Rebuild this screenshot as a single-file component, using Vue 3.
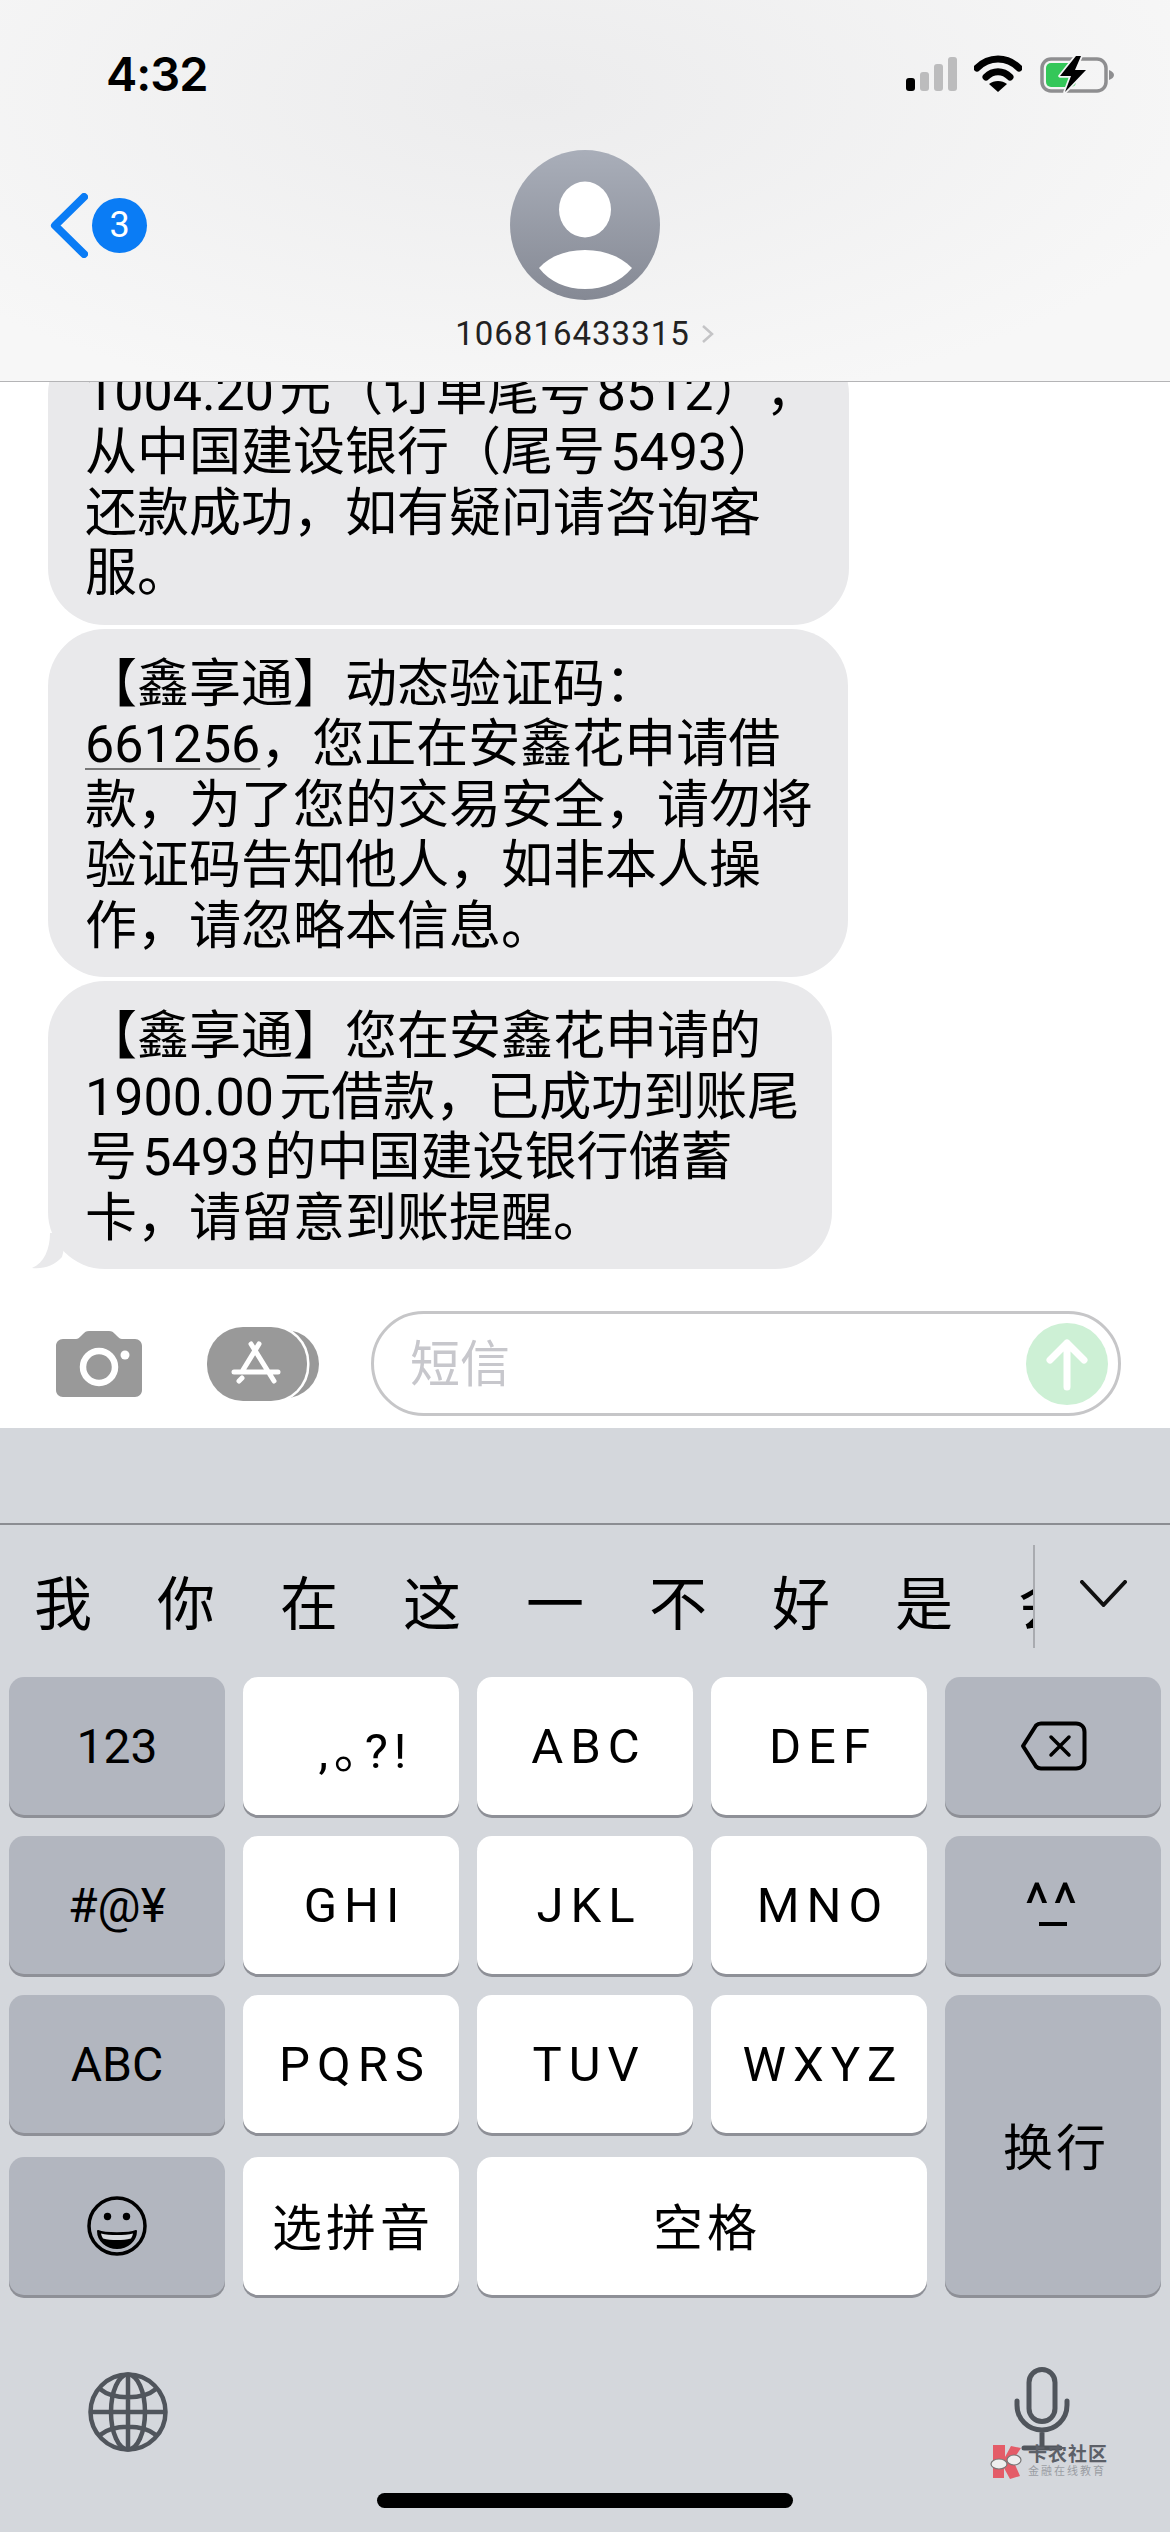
<template>
  <div class="phone">
    <header class="top">
      <div class="status">
        <span class="time">4:32</span>
        <div class="status-icons">
          <div class="signal">
            <i v-for="(h, i) in signalBars" :key="i" :class="{ on: i === 0 }" :style="{ height: h + 'px' }"></i>
          </div>
          <svg class="wifi" width="48" height="38" viewBox="0 0 48 38">
            <path d="M3 13C15 1 33 1 45 13" fill="none" stroke="#000" stroke-width="7" stroke-linecap="round" />
            <path d="M12 22C19 15 29 15 36 22" fill="none" stroke="#000" stroke-width="7" stroke-linecap="round" />
            <path d="M24 37L15 29C20 25 28 25 33 29Z" fill="#000" />
          </svg>
          <svg class="battery" width="75" height="38" viewBox="0 0 75 38">
            <rect x="2" y="4" width="64" height="32" rx="9" fill="none" stroke="#8e8e90" stroke-width="3.5" />
            <rect x="6" y="8" width="30" height="24" rx="5" fill="#34c759" />
            <path d="M69 15c3 1 5 3 5 5s-2 4-5 5Z" fill="#8e8e90" />
            <path d="M36 1L20 21H31L25 37L46 15H35L41 1Z" fill="#000" stroke="#f5f5f6" stroke-width="3.5" paint-order="stroke" stroke-linejoin="round" />
          </svg>
        </div>
      </div>
      <div class="nav">
        <div class="back">
          <svg width="38" height="65" viewBox="0 0 38 65">
            <path d="M34 4L5 32.5L34 61" fill="none" stroke="#0a7cf5" stroke-width="8" stroke-linecap="round" stroke-linejoin="round" />
          </svg>
          <span class="badge">3</span>
        </div>
        <div class="contact">
          <svg width="150" height="150" viewBox="0 0 150 150">
            <defs>
              <linearGradient id="avatarFill" x1="0" y1="0" x2="0" y2="1">
                <stop offset="0" stop-color="#a9aeb9" />
                <stop offset="1" stop-color="#858994" />
              </linearGradient>
            </defs>
            <circle cx="75" cy="75" r="75" fill="url(#avatarFill)" />
            <ellipse cx="75" cy="59.500" rx="26" ry="28" fill="#fff" />
            <path d="M29 118C40 106 56 100 75 100S110 106 122 118C110 132 94 139 75 139S40 132 29 118Z" fill="#fff" />
          </svg>
          <div class="contact-name">
            <span>106816433315</span>
            <svg width="14" height="20" viewBox="0 0 14 20">
              <path d="M2 2L11 10L2 18" fill="none" stroke="#c4c4c6" stroke-width="2.500" />
            </svg>
          </div>
        </div>
        <div></div>
      </div>
    </header>

    <main class="messages">
      <div v-for="(msg, i) in messages" :key="i" class="bubble" :style="{ width: msg.width + 'px' }">
        <div v-for="(line, j) in msg.lines" :key="j" class="line">
          <span v-if="line.code" class="code">{{ line.code }}</span>{{ line.text }}
        </div>
        <svg v-if="i === messages.length - 1" class="tail" width="36" height="36" viewBox="0 0 36 36">
          <path d="M18 0C18 16 12 30 0 35C12 36 22 33 30 24L36 0Z" fill="#e9e9eb" />
        </svg>
      </div>
    </main>

    <section class="composer">
      <svg class="camera" width="86" height="66" viewBox="0 0 86 66">
        <path d="M7 8H20C22 8 23 7 25 5L27 3C29 1 30 0 33 0H53C56 0 57 1 59 3L61 5C63 7 64 8 66 8H79C83 8 86 11 86 15V59C86 63 83 66 79 66H7C3 66 0 63 0 59V15C0 11 3 8 7 8Z" fill="#999" />
        <circle cx="43" cy="36" r="16" fill="none" stroke="#fff" stroke-width="6.500" />
        <circle cx="69" cy="24" r="4.500" fill="#fff" />
      </svg>
      <svg class="appstore" width="113" height="74" viewBox="0 0 113 74">
        <rect x="40" y="3" width="72" height="68" rx="34" fill="#999" />
        <rect x="0" y="0" width="100" height="74" rx="36" fill="#999" stroke="#fff" stroke-width="5" paint-order="stroke" />
        <path d="M44 17L67 54M52 17L36 43M27 45H71M32 54L35 51" fill="none" stroke="#fff" stroke-width="5" stroke-linecap="round" />
      </svg>
      <div class="field">
        <span class="placeholder">短信</span>
        <svg class="send" width="82" height="82" viewBox="0 0 82 82">
          <circle cx="41" cy="41" r="41" fill="#cdf0d5" />
          <path d="M41 64V20M24 37L41 20L58 37" fill="none" stroke="#fff" stroke-width="7" stroke-linecap="round" stroke-linejoin="round" />
        </svg>
      </div>
    </section>

    <section class="keyboard">
      <div class="kb-spacer"></div>
      <div class="candidates">
        <div class="candidate-list">
          <span v-for="c in candidates" :key="c" class="candidate">{{ c }}</span>
        </div>
        <div class="expand">
          <svg width="47" height="27" viewBox="0 0 47 27">
            <path d="M2 2L23.500 25L45 2" fill="none" stroke="#111" stroke-width="4" stroke-linecap="round" stroke-linejoin="round" />
          </svg>
        </div>
      </div>
      <div class="keys">
        <div v-for="k in keys" :key="k.label" class="key" :class="k.cls">{{ k.label }}</div>
        <div class="key fn backspace">
          <svg width="67" height="50" viewBox="0 0 67 50">
            <path d="M21 2.500H56C61 2.500 64.500 6 64.500 11V39C64.500 44 61 47.500 56 47.500H21C19 47.500 17.500 47 16 45.500L3 25L16 4.500C17.500 3 19 2.500 21 2.500Z" fill="none" stroke="#000" stroke-width="4" stroke-linejoin="round" />
            <path d="M31 16L49 34M49 16L31 34" fill="none" stroke="#000" stroke-width="3.500" stroke-linecap="round" />
          </svg>
        </div>
        <div class="key fn kaomoji">
          <span class="carets">^^</span>
          <span class="dash"></span>
        </div>
        <div class="key fn enter">换行</div>
        <div class="key fn emoji">
          <svg width="60" height="60" viewBox="0 0 60 60">
            <circle cx="30" cy="30" r="28" fill="none" stroke="#000" stroke-width="3.500" />
            <circle cx="20.500" cy="20.500" r="3.700" fill="#000" />
            <circle cx="39.500" cy="20.500" r="3.700" fill="#000" />
            <path d="M11 35C18 38 42 38 49 35C49 45 40 52 30 52S11 45 11 35Z" fill="#000" stroke="#000" stroke-width="2" stroke-linejoin="round" />
            <path d="M14 37.500C22 39.500 38 39.500 46 37.500C45.500 39.500 45 41 44 42.500C36 44.500 24 44.500 16 42.500C15 41 14.500 39.500 14 37.500Z" fill="#d8dade" />
          </svg>
        </div>
        <div class="key letter pinyin">选拼音</div>
        <div class="key letter space">空格</div>
      </div>
      <div class="kb-bottom">
        <svg width="80" height="80" viewBox="0 0 80 80">
          <g fill="none" stroke="#50555c" stroke-width="4.500">
            <circle cx="40" cy="40" r="37.500" />
            <ellipse cx="40" cy="40" rx="17" ry="37.500" />
            <path d="M40 3V77M3 40H77M12 17C25 28 55 28 68 17M12 63C25 52 55 52 68 63" />
          </g>
        </svg>
        <svg class="mic" width="56" height="84" viewBox="0 0 56 84">
          <g fill="none" stroke="#50555c" stroke-width="5" stroke-linecap="round">
            <rect x="15" y="2.500" width="26" height="52" rx="13" />
            <path d="M3 34V38C3 52 14 63 28 63S53 52 53 38V34M28 63V81M10 81H46" />
          </g>
        </svg>
      </div>
      <div class="home-bar"></div>
      <div class="watermark">
        <svg width="36" height="36" viewBox="0 0 36 36">
          <path d="M5 1H17V13L23 2L33 4L25 16L32 32L22 35L16 24V34H5Z" fill="#e45c68" />
          <ellipse cx="11" cy="20" rx="8" ry="5" fill="#eee" stroke="#777" stroke-width="1.200" />
          <ellipse cx="26" cy="16" rx="7" ry="5" fill="#eee" stroke="#777" stroke-width="1.200" />
        </svg>
        <div class="wm-text">
          <div class="wm-title">卡农社区</div>
          <div class="wm-sub">金融在线教育</div>
        </div>
      </div>
    </section>
  </div>
</template>

<script setup>
const signalBars = [13, 19, 27, 34];

// 每行单独写，保持和截图一样的折行
const messages = [
  {
    width: 801,
    lines: [
      { text: '1004.20\u200a元（订单尾号\u200a8512），' },
      { text: '从中国建设银行（尾号\u200a5493）' },
      { text: '还款成功，如有疑问请咨询客' },
      { text: '服。' },
    ],
  },
  {
    width: 800,
    lines: [
      { text: '【鑫享通】动态验证码：' },
      { code: '661256', text: '，您正在安鑫花申请借' },
      { text: '款，为了您的交易安全，请勿将' },
      { text: '验证码告知他人，如非本人操' },
      { text: '作，请忽略本信息。' },
    ],
  },
  {
    width: 784,
    lines: [
      { text: '【鑫享通】您在安鑫花申请的' },
      { text: '1900.00\u200a元借款，已成功到账尾' },
      { text: '号\u200a5493\u200a的中国建设银行储蓄' },
      { text: '卡，请留意到账提醒。' },
    ],
  },
];

const candidates = ['我', '你', '在', '这', '一', '不', '好', '是', '会'];

const keys = [
  { label: '123', cls: 'fn' },
  { label: ',｡?!', cls: 'letter punct' },
  { label: 'ABC', cls: 'letter' },
  { label: 'DEF', cls: 'letter' },
  { label: '#@¥', cls: 'fn r2' },
  { label: 'GHI', cls: 'letter' },
  { label: 'JKL', cls: 'letter' },
  { label: 'MNO', cls: 'letter' },
  { label: 'ABC ', cls: 'fn r3' },
  { label: 'PQRS', cls: 'letter' },
  { label: 'TUV', cls: 'letter' },
  { label: 'WXYZ', cls: 'letter' },
];
</script>

<style>
html,
body {
  margin: 0;
  background: #fff;
}
</style>

<style scoped>
.phone {
  width: 1170px;
  height: 2532px;
  display: flex;
  flex-direction: column;
  overflow: hidden;
  background: #fff;
  font-family: Roboto, "Noto Sans CJK SC", sans-serif;
  color: #000;
}

.top {
  height: 382px;
  box-sizing: border-box;
  flex: none;
  border-bottom: 1px solid #b4b4b6;
  background: radial-gradient(ellipse at 45% 25%, #ececed, #f7f7f7 80%);
  position: relative;
  z-index: 1;
}
.status {
  height: 150px;
  box-sizing: border-box;
  padding: 55px 55px 0 106px;
  display: flex;
  justify-content: space-between;
  align-items: flex-start;
}
.time {
  font-family: Inter, sans-serif;
  font-size: 47px;
  font-weight: 600;
  line-height: 38px;
  letter-spacing: -1px;
}
.status-icons {
  display: flex;
  align-items: flex-start;
}
.signal {
  display: flex;
  align-items: flex-end;
  gap: 5px;
  height: 36px;
  margin-right: 17px;
}
.signal i {
  width: 9px;
  border-radius: 3px;
  background: #bcbcbd;
}
.signal i.on {
  background: #000;
}
.battery {
  margin-left: 18px;
}
.nav {
  display: grid;
  grid-template-columns: 1fr auto 1fr;
}
.back {
  display: flex;
  align-items: center;
  align-self: start;
  height: 65px;
  margin: 43px 0 0 50px;
}
.badge {
  width: 55px;
  height: 55px;
  border-radius: 50%;
  background: #0a7cf5;
  color: #fff;
  font-size: 36px;
  line-height: 55px;
  text-align: center;
  margin-left: 4px;
}
.contact {
  display: flex;
  flex-direction: column;
  align-items: center;
}
.contact svg {
  display: block;
}
.contact-name {
  display: flex;
  align-items: center;
  gap: 11px;
  margin-top: 15px;
  font-size: 33px;
  line-height: 38px;
  letter-spacing: 1px;
  color: #222;
}

.messages {
  flex: 1;
  min-height: 0;
  overflow: hidden;
  display: flex;
  flex-direction: column;
  justify-content: flex-end;
  align-items: flex-start;
  gap: 4px;
  padding: 0 0 21px 48px;
}
.bubble {
  flex: none;
  position: relative;
  box-sizing: border-box;
  padding: 26px 20px 20px 37px;
  background: #e9e9eb;
  border-radius: 57px;
  font-size: 52px;
  line-height: 60.500px;
  white-space: nowrap;
  text-spacing-trim: space-all;
}
.code {
  text-decoration: underline;
  text-decoration-thickness: 2px;
  text-underline-offset: 6px;
  text-decoration-color: #777;
}
.tail {
  position: absolute;
  left: -16px;
  bottom: 0;
}

.composer {
  height: 138px;
  flex: none;
  box-sizing: border-box;
  padding-top: 21px;
  display: flex;
  align-items: flex-start;
}
.camera {
  margin: 20px 0 0 56px;
}
.appstore {
  margin: 16px 0 0 65px;
  overflow: visible;
}
.field {
  width: 750px;
  height: 105px;
  box-sizing: border-box;
  margin-left: 51px;
  border: 3px solid #c6c6c8;
  border-radius: 53px;
  padding: 9px 10px 0 36px;
  display: flex;
  justify-content: space-between;
}
.placeholder {
  font-size: 50px;
  line-height: 84px;
  color: #c7c7cc;
}

.keyboard {
  flex: none;
  height: 1104px;
  position: relative;
  background: #d4d7dc;
}
.kb-spacer {
  height: 95px;
  border-bottom: 2px solid #8b8d92;
}
.candidates {
  height: 152px;
  position: relative;
}
.candidate-list {
  width: 1033px;
  height: 100%;
  overflow: hidden;
  box-sizing: border-box;
  padding: 50px 0 0 34px;
  display: flex;
  gap: 65px;
}
.candidate {
  flex: none;
  width: 58px;
  font-size: 58px;
  line-height: 60px;
  color: #000;
}
.expand {
  position: absolute;
  left: 1033px;
  top: 20px;
  width: 2px;
  height: 103px;
  background: #a9abb0;
}
.expand svg {
  position: absolute;
  left: 47px;
  top: 35px;
}
.keys {
  display: grid;
  grid-template-columns: repeat(5, 216px);
  grid-template-rows: 138px 138px 138px 141px;
  column-gap: 18px;
  row-gap: 21px;
  padding: 0 9px;
}
.key {
  height: 138px;
  box-sizing: border-box;
  border-radius: 15px;
  box-shadow: 0 3px 0 #8e9097;
  display: flex;
  align-items: center;
  justify-content: center;
  font-size: 48px;
  white-space: nowrap;
}
.fn {
  background: #b2b6bf;
}
.letter {
  background: #fff;
  font-size: 49px;
  letter-spacing: 7px;
  padding-left: 8px;
}
.punct {
  padding-left: 29px;
  letter-spacing: 6px;
}
/* 第一列 */
.r2 {
  grid-column: 1;
}
.r3 {
  grid-column: 1;
}
.backspace {
  grid-column: 5;
  grid-row: 1;
}
.kaomoji {
  grid-column: 5;
  grid-row: 2;
  flex-direction: column;
}
.carets {
  font-size: 58px;
  line-height: 40px;
  height: 24px;
  letter-spacing: 4px;
}
.dash {
  width: 28px;
  height: 4px;
  background: #000;
  margin-top: 14px;
}
.enter {
  grid-column: 5;
  grid-row: 3 / 5;
  height: 300px;
  font-size: 50px;
  letter-spacing: 3px;
  padding: 0 0 3px 6px;
}
.emoji {
  grid-column: 1;
  grid-row: 4;
  align-self: end;
}
.pinyin {
  grid-column: 2;
  grid-row: 4;
  align-self: end;
  font-size: 50px;
  letter-spacing: 4px;
  padding: 0 0 4px 4px;
}
.space {
  grid-column: 3 / 5;
  grid-row: 4;
  align-self: end;
  font-size: 50px;
  letter-spacing: 4px;
  padding: 0 0 4px 10px;
}
.kb-bottom {
  display: flex;
  justify-content: space-between;
  align-items: flex-start;
  padding: 72px 100px 0 88px;
  height: 85px;
}
.kb-bottom svg {
  margin-top: 5px;
}
.kb-bottom .mic {
  margin-top: 0;
}
.home-bar {
  width: 416px;
  height: 15px;
  border-radius: 8px;
  background: #000;
  margin: 41px auto 0;
}
.watermark {
  position: absolute;
  left: 988px;
  top: 1016px;
  display: flex;
  gap: 4px;
}
.wm-text {
  padding-top: 1px;
}
.wm-title {
  font-size: 19px;
  line-height: 20px;
  font-weight: 700;
  letter-spacing: 1px;
  color: #5c6068;
}
.wm-sub {
  font-size: 11px;
  line-height: 14px;
  letter-spacing: 2px;
  color: #9a9da3;
}
</style>
